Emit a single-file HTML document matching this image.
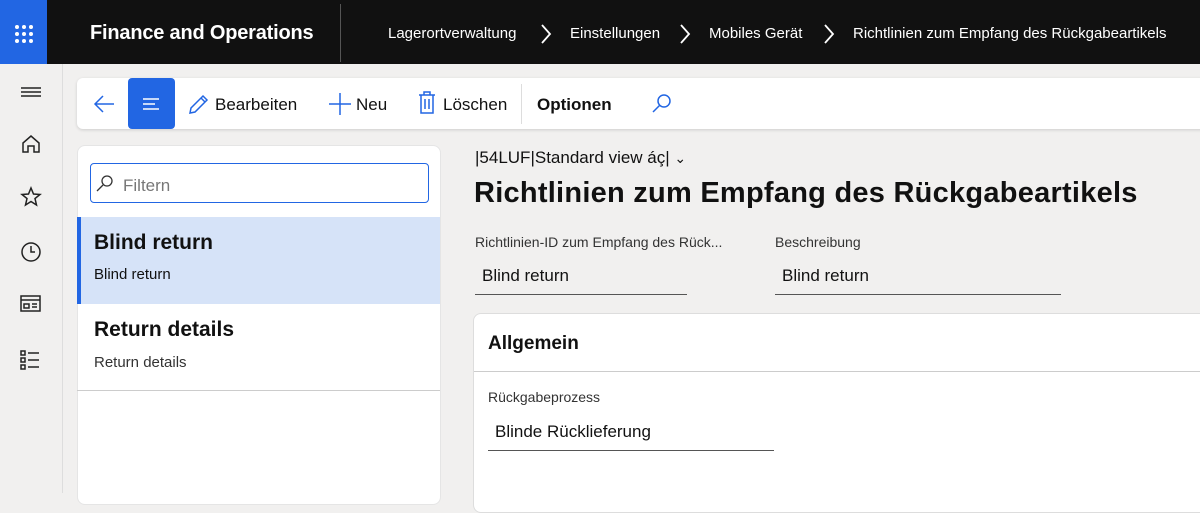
<!DOCTYPE html><html><head><style>
*{box-sizing:border-box;margin:0;padding:0}
body{width:1200px;height:493px;overflow:hidden;background:#f1f0ef;font-family:"Liberation Sans",sans-serif;position:relative;color:#111}
.a{position:absolute}
.bc{position:absolute;top:25px;color:#fff;font-size:15px;white-space:nowrap}
</style></head><body>
<div class="a" style="left:0;top:0;width:1200px;height:64px;background:#111"></div>
<div class="a" style="left:0;top:0;width:47px;height:64px;background:#2266e3">
<svg width="47" height="64"><g fill="#fff"><circle cx="17" cy="27" r="2"/><circle cx="24" cy="27" r="2"/><circle cx="31" cy="27" r="2"/><circle cx="17" cy="34" r="2"/><circle cx="24" cy="34" r="2"/><circle cx="31" cy="34" r="2"/><circle cx="17" cy="41" r="2"/><circle cx="24" cy="41" r="2"/><circle cx="31" cy="41" r="2"/></g></svg></div>
<div class="a" style="left:90px;top:22px;color:#fff;font-size:20px;font-weight:bold;letter-spacing:-.2px">Finance and Operations</div>
<div class="a" style="left:340px;top:4px;width:1px;height:58px;background:#555"></div>
<div class="bc" style="left:388px">Lagerortverwaltung</div>
<div class="bc" style="left:570px">Einstellungen</div>
<div class="bc" style="left:709px">Mobiles Gerät</div>
<div class="bc" style="left:853px">Richtlinien zum Empfang des Rückgabeartikels</div>
<svg class="a" style="left:0;top:0" width="1200" height="64" fill="none" stroke="#fff" stroke-width="1.8"><path d="M542 25l8 9-8 9M681 25l8 9-8 9M825 25l8 9-8 9"/></svg>
<div class="a" style="left:62px;top:64px;width:1px;height:429px;background:#ddd"></div>
<svg class="a" style="left:0;top:64px" width="62" height="320" fill="none" stroke="#222" stroke-width="1.5">
<path d="M21 24h20M21 28h20M21 32h20"/>
<path d="M23 88v-9l8-7 8 7v9h-5v-6h-6v6z"/>
<path d="M31 124l2.5 6 6.5.5-5 4 1.5 6.5-5.5-3.5-5.5 3.5 1.5-6.5-5-4 6.5-.5z"/>
<circle cx="31" cy="188" r="9"/><path d="M31 182v6h4"/>
<rect x="21" y="232" width="19" height="15"/><path d="M21 236h19M24 240h5v4h-5zM32 240h5M32 243h5"/>
<path d="M21 287h4v4h-4zM21 294h4v4h-4zM21 301h4v4h-4zM28 289h11M28 296h11M28 303h11"/>
</svg>
<div class="a" style="left:77px;top:78px;width:1130px;height:51px;background:#fff;border-radius:6px;box-shadow:0 1px 3px rgba(0,0,0,.15)"></div>
<svg class="a" style="left:92px;top:92px" width="24" height="24" fill="none" stroke="#2266e3" stroke-width="1.5"><path d="M22 12H3M11 4l-8 8 8 8"/></svg>
<div class="a" style="left:128px;top:78px;width:47px;height:51px;background:#2266e3;border-radius:4px"><svg width="47" height="51" stroke="#fff" stroke-width="1.5"><path d="M15 21h16M15 26h12M15 31h16"/></svg></div>
<svg class="a" style="left:187px;top:92px" width="24" height="24" fill="none" stroke="#2266e3" stroke-width="1.5"><path d="M3 21l1-5L16 4l4 4L8 20zM14 6l4 4"/></svg>
<div class="a" style="left:215px;top:95px;font-size:17px">Bearbeiten</div>
<svg class="a" style="left:328px;top:92px" width="24" height="24" stroke="#2266e3" stroke-width="1.5"><path d="M12 1v22M1 12h22"/></svg>
<div class="a" style="left:356px;top:95px;font-size:17px">Neu</div>
<svg class="a" style="left:416px;top:90px" width="22" height="26" fill="none" stroke="#2266e3" stroke-width="1.5"><path d="M3 5h16M8 5V2h6v3M5 5v18h12V5M9 9v10M13 9v10"/></svg>
<div class="a" style="left:443px;top:95px;font-size:17px">Löschen</div>
<div class="a" style="left:521px;top:84px;width:1px;height:40px;background:#ddd"></div>
<div class="a" style="left:537px;top:95px;font-size:17px;font-weight:bold">Optionen</div>
<svg class="a" style="left:651px;top:93px" width="22" height="22" fill="none" stroke="#2266e3" stroke-width="1.5"><circle cx="13" cy="8" r="6"/><path d="M9 12l-7 7"/></svg>
<div class="a" style="left:77px;top:145px;width:364px;height:360px;background:#fff;border-radius:8px;border:1px solid #e5e5e5"></div>
<div class="a" style="left:90px;top:163px;width:339px;height:40px;border:1.5px solid #2266e3;border-radius:4px;background:#fff"></div>
<svg class="a" style="left:96px;top:175px" width="18" height="18" fill="none" stroke="#333" stroke-width="1.3"><circle cx="11" cy="6" r="5"/><path d="M7 10l-6 6"/></svg>
<div class="a" style="left:123px;top:176px;font-size:17px;color:#777">Filtern</div>
<div class="a" style="left:77px;top:217px;width:363px;height:87px;background:#d6e3f8;border-left:4px solid #2266e3"></div>
<div class="a" style="left:94px;top:231px;font-size:21px;font-weight:bold;color:#111">Blind return</div>
<div class="a" style="left:94px;top:266px;font-size:15px">Blind return</div>
<div class="a" style="left:94px;top:318px;font-size:21px;font-weight:bold">Return details</div>
<div class="a" style="left:94px;top:354px;font-size:15px;color:#333">Return details</div>
<div class="a" style="left:77px;top:390px;width:363px;height:1px;background:#ccc"></div>
<div class="a" style="left:475px;top:148px;font-size:17px">|54LUF|Standard view áç| <span style="font-size:14px">⌄</span></div>
<div class="a" style="left:474px;top:177px;font-size:29px;font-weight:bold;letter-spacing:.25px">Richtlinien zum Empfang des Rückgabeartikels</div>
<div class="a" style="left:475px;top:234px;font-size:14px;color:#333">Richtlinien-ID zum Empfang des Rück...</div>
<div class="a" style="left:775px;top:234px;font-size:14px;color:#333">Beschreibung</div>
<div class="a" style="left:482px;top:266px;font-size:17px">Blind return</div>
<div class="a" style="left:782px;top:266px;font-size:17px">Blind return</div>
<div class="a" style="left:475px;top:294px;width:212px;height:1px;background:#555"></div>
<div class="a" style="left:775px;top:294px;width:286px;height:1px;background:#555"></div>
<div class="a" style="left:473px;top:313px;width:740px;height:200px;background:#fff;border:1px solid #ddd;border-radius:8px"></div>
<div class="a" style="left:488px;top:333px;font-size:19px;font-weight:bold">Allgemein</div>
<div class="a" style="left:474px;top:371px;width:730px;height:1px;background:#ccc"></div>
<div class="a" style="left:488px;top:389px;font-size:14px;color:#333">Rückgabeprozess</div>
<div class="a" style="left:495px;top:422px;font-size:17px">Blinde Rücklieferung</div>
<div class="a" style="left:488px;top:450px;width:286px;height:1px;background:#555"></div>
</body></html>
